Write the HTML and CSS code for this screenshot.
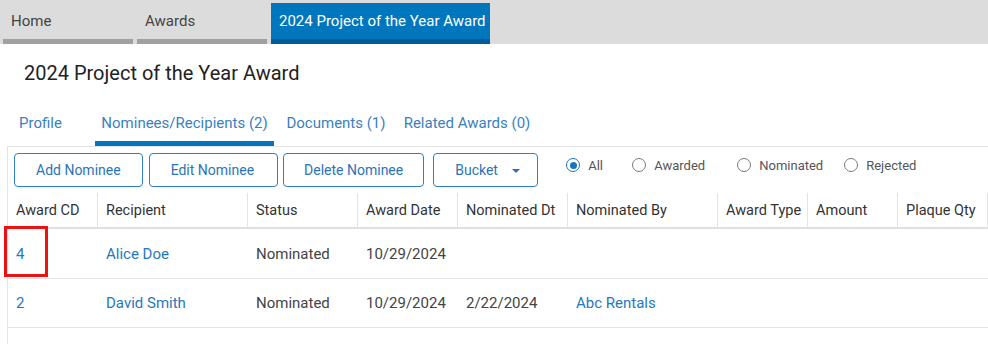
FILE: index.html
```html
<!DOCTYPE html>
<html>
<head>
<meta charset="utf-8">
<link rel="stylesheet" href="styles.css">
</head>
<body>
<nav class="topbar">
  <div class="toptab">Home</div>
  <div class="toptab">Awards</div>
  <div class="toptab active">2024 Project of the Year Award</div>
</nav>
<h1 class="title">2024 Project of the Year Award</h1>
<div class="subtabs">
  <div class="subtab w-profile">Profile</div>
  <div class="subtab w-nom active">Nominees/Recipients (2)</div>
  <div class="subtab w-docs">Documents (1)</div>
  <div class="subtab w-rel">Related Awards (0)</div>
</div>
<section class="panel">
  <div class="toolbar">
    <div class="buttons">
      <button class="btn">Add Nominee</button>
      <button class="btn b2">Edit Nominee</button>
      <button class="btn b3">Delete Nominee</button>
      <button class="btn b4">Bucket <span class="caret"></span></button>
    </div>
    <div class="radios">
      <label class="radio r-all"><span class="dot on"></span>All</label>
      <label class="radio r-aw"><span class="dot"></span>Awarded</label>
      <label class="radio r-nom"><span class="dot"></span>Nominated</label>
      <label class="radio"><span class="dot"></span>Rejected</label>
    </div>
  </div>
  <div class="grid head">
    <div class="hc">Award CD</div>
    <div class="hc">Recipient</div>
    <div class="hc">Status</div>
    <div class="hc">Award Date</div>
    <div class="hc">Nominated Dt</div>
    <div class="hc">Nominated By</div>
    <div class="hc">Award Type</div>
    <div class="hc">Amount</div>
    <div class="hc">Plaque Qty</div>
  </div>
  <div class="grid row">
    <div class="c link marked">4<span class="mark"></span></div>
    <div class="c link">Alice Doe</div>
    <div class="c">Nominated</div>
    <div class="c">10/29/2024</div>
    <div class="c"></div>
    <div class="c"></div>
    <div class="c"></div>
    <div class="c"></div>
    <div class="c"></div>
  </div>
  <div class="grid row">
    <div class="c link">2</div>
    <div class="c link">David Smith</div>
    <div class="c">Nominated</div>
    <div class="c">10/29/2024</div>
    <div class="c">2/22/2024</div>
    <div class="c link">Abc Rentals</div>
    <div class="c"></div>
    <div class="c"></div>
    <div class="c"></div>
  </div>
</section>
</body>
</html>
```
FILE: styles.css
```css
* { box-sizing: border-box; }
html, body { margin: 0; padding: 0; background: #fff; }
body {
  font-family: Roboto, "Liberation Sans", sans-serif;
  color: #333;
  width: 988px;
  height: 344px;
  overflow: hidden;
}
.topbar {
  display: flex;
  gap: 4px;
  background: #dcdcdc;
  height: 44px;
  padding: 3px 0 0 3px;
}
.toptab {
  width: 130px;
  height: 41px;
  line-height: 36px;
  padding: 0 8px;
  font-size: 15px;
  color: #444;
  border-bottom: 5px solid #a0a0a0;
  white-space: nowrap;
}
.toptab.active {
  width: 219px;
  background: #0077bd;
  color: #fff;
  border-bottom-color: #005a9c;
}
.title {
  margin: 0;
  padding: 17px 24px 0;
  font-size: 20px;
  line-height: 24px;
  font-weight: 400;
  color: #222;
}
.subtabs {
  display: flex;
  margin-top: 18px;
  padding-left: 11px;
}
.subtab {
  height: 43px;
  padding-top: 10px;
  line-height: 20px;
  font-size: 15px;
  color: #3a7fbe;
  text-align: center;
  white-space: nowrap;
  border-bottom: 5px solid transparent;
}
.subtab.active { border-bottom-color: #0077bd; }
.w-profile { width: 59px; }
.w-nom { width: 179px; margin-left: 25px; }
.w-docs { width: 116px; margin-left: 4px; }
.w-rel { width: 142px; margin-left: 2px; }
.panel {
  margin-left: 7px;
  border-top: 1px solid #e3e3e3;
  border-left: 1px solid #e3e3e3;
  height: 198px;
}
.toolbar {
  display: flex;
  align-items: flex-start;
  padding: 6px 0 5px 6px;
}
.buttons { display: flex; gap: 6px; }
.btn {
  height: 34px;
  padding: 0 21px;
  font-family: inherit;
  font-size: 14px;
  color: #2b74b6;
  background: #fff;
  border: 1px solid #2f80c0;
  border-radius: 4px;
  white-space: nowrap;
}
.b2 { padding-right: 23px; }
.b3 { margin-left: -1px; padding: 0 20px; }
.b4 { margin-left: 3px; width: 105px; text-align: left; padding-left: 21px; }
.caret {
  display: inline-block;
  width: 0; height: 0;
  margin-left: 11px;
  vertical-align: middle;
  border-left: 4px solid transparent;
  border-right: 4px solid transparent;
  border-top: 4px solid #2b74b6;
}
.radios {
  display: flex;
  margin: 5px 0 0 28px;
}
.radio {
  display: flex;
  align-items: center;
  height: 14px;
  font-size: 13px;
  color: #555;
  white-space: nowrap;
}
.r-all { width: 66px; }
.r-aw { width: 105px; }
.r-nom { width: 107px; }
.dot {
  width: 14px; height: 14px;
  border: 1.5px solid #7a7a7a;
  border-radius: 50%;
  margin-right: 8px;
  display: flex;
  align-items: center;
  justify-content: center;
}
.dot.on { border-color: #1d72bd; }
.dot.on::after {
  content: "";
  width: 7px; height: 7px;
  border-radius: 50%;
  background: #1d72bd;
}
.grid {
  display: grid;
  grid-template-columns: 90px 150px 110px 100px 110px 150px 90px 90px 90px;
}
.head {
  height: 37px;
  padding-top: 1px;
  border-bottom: 2px solid #e0e0e0;
}
.hc {
  display: flex;
  align-items: center;
  padding-left: 8px;
  font-size: 14.5px;
  color: #333;
  border-right: 1px solid #e3e3e3;
  white-space: nowrap;
}
.row {
  height: 50px;
  border-bottom: 1px solid #e3e3e3;
}
.row + .row { height: 49px; }
.c {
  display: flex;
  align-items: center;
  padding-left: 8px;
  font-size: 15px;
  color: #444;
  white-space: nowrap;
}
.c.link { color: #1f78c1; }
.marked { position: relative; }
.mark {
  position: absolute;
  left: -4px;
  top: -3px;
  width: 44px;
  height: 51px;
  border: 3px solid #ee1111;
}
```
